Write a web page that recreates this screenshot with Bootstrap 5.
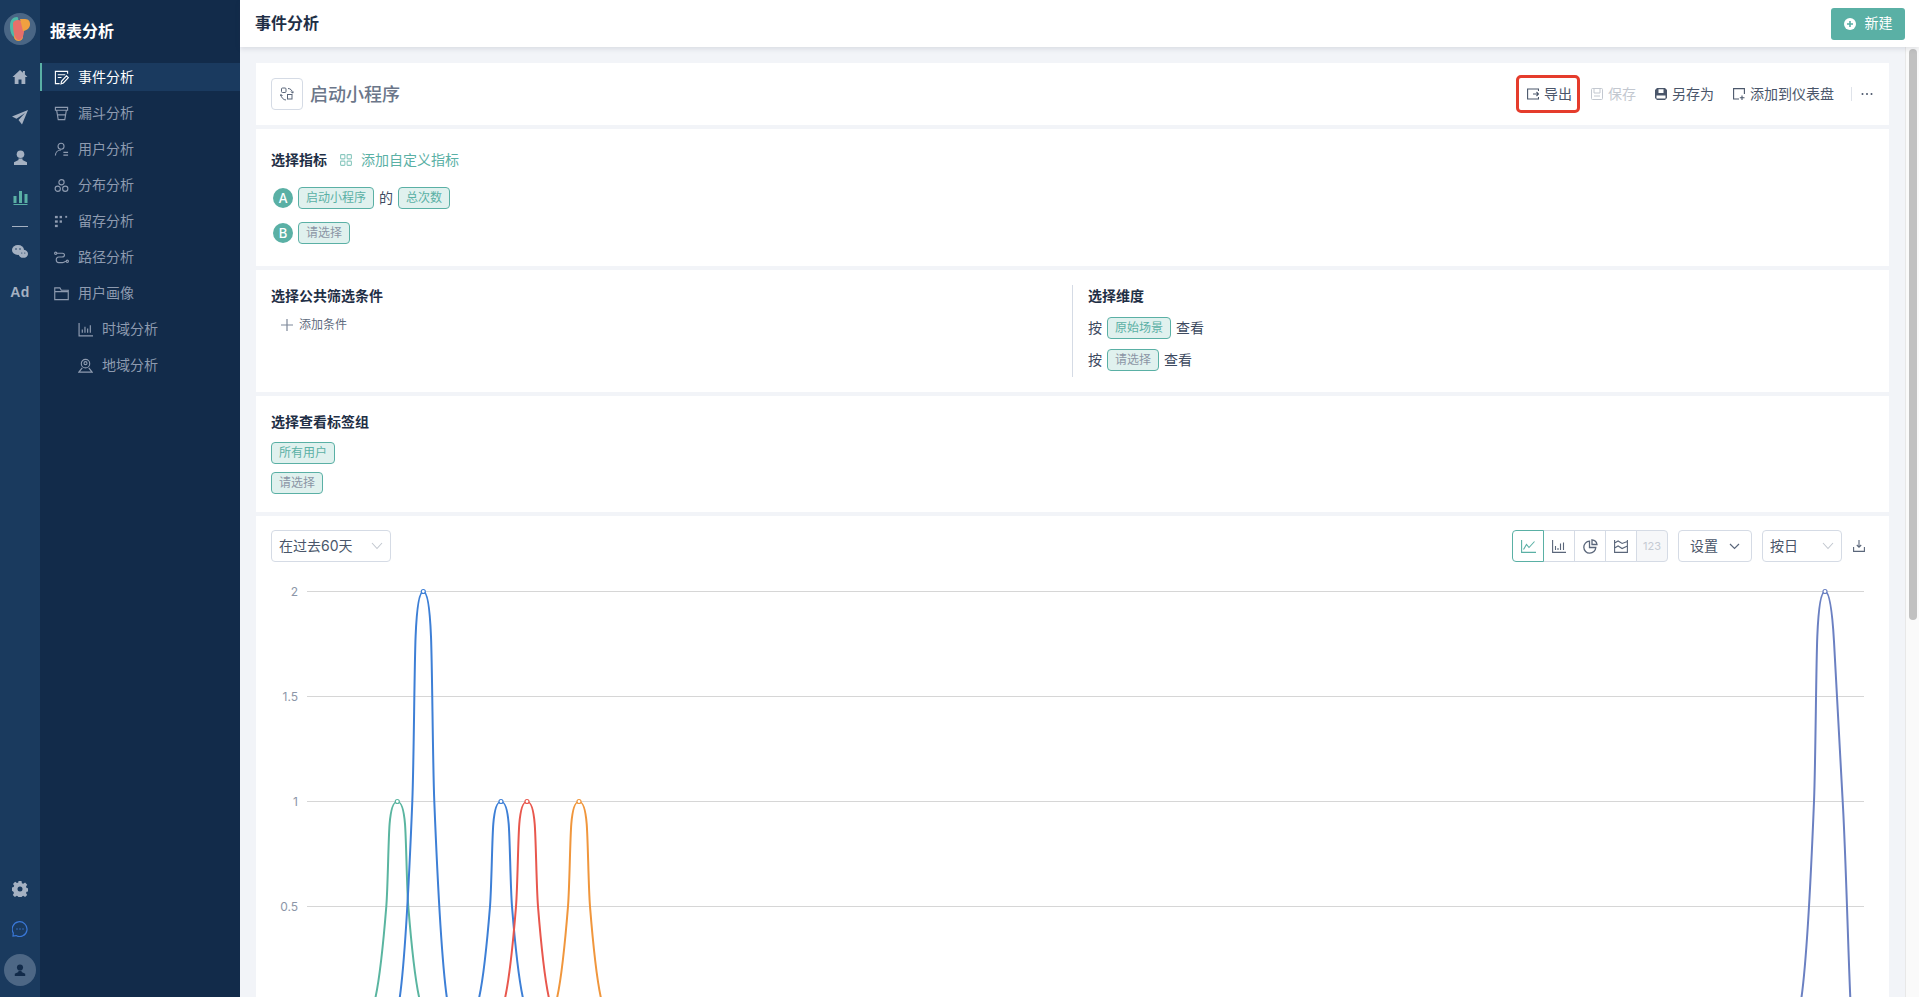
<!DOCTYPE html>
<html lang="zh-CN">
<head>
<meta charset="utf-8">
<title>事件分析</title>
<link rel="stylesheet" href="https://cdn.jsdelivr.net/npm/bootstrap@5.3.0/dist/css/bootstrap.min.css">
<style>
html,body{height:100%;margin:0;background:#f2f4f8;font-family:Inter,"Noto Sans CJK SC",sans-serif;color:#3d4a5f;font-size:14px;line-height:20px}
.app-shell{height:100vh;overflow:hidden}
.rail{width:40px;flex:none;background:#1a3a5e;color:#a5b1c2}
.rail-logo{width:32px;height:32px;border-radius:50%;background:#4a6685;margin:13px 4px 12px;flex:none;display:flex;align-items:center;justify-content:center}
.rail-slot{height:40px;flex:none;display:flex;align-items:center;justify-content:center}
.rail-sep{width:16px;height:1px;background:#a5b1c2;margin:9px 12px 5px;flex:none}
.rail-ad{font:700 14px/1 "Liberation Sans",sans-serif;letter-spacing:.3px}
.rail-avatar{width:32px;height:32px;border-radius:50%;background:#4d6785;margin:5px 4px 11px;display:flex;align-items:center;justify-content:center;flex:none}
.side{width:200px;flex:none;background:#122b4a;color:#8e9bb0}
.side-title{height:55px;padding:21px 0 0 10px;font-size:16px;line-height:20px;font-weight:700;color:#fff}
.side-item{height:28px;margin-top:8px;display:flex;align-items:center;gap:9px;color:#8e9bb0;text-decoration:none;border-left:2px solid transparent;padding-left:12px}
.side-item.on{background:#1a3a5f;color:#fff;border-left-color:#5ab0a5}
.side-item.sub{padding-left:36px}
.side-item svg{flex:none;width:15px;height:15px}
.main-col{min-width:0}
.topbar{height:47px;background:#fff;box-shadow:0 2px 5px rgba(40,50,70,.12);padding:0 14px 0 15px;position:relative;z-index:2;flex:none}
.topbar-title{font-size:16px;font-weight:700;color:#1f2f46;padding-bottom:2px}
.btn-new{background:#5ab0a5;border:0;border-radius:3px;color:#fff;height:32px;width:74px;padding:0;font-size:14px;gap:9px}
.btn-new:hover{background:#5ab0a5;color:#fff}
.btn-new-label{margin-bottom:2px}
.work-row{flex:1;min-height:0}
.scroller{flex:1;min-width:0;overflow:hidden;padding:16px;display:flex;flex-direction:column;gap:4px}
.scroll-track{width:14px;flex:none;background:#fafafa;border-left:1px solid #e8e8e8;padding:2px 2px 0 3px}
.scroll-thumb{height:571px;background:#c1c1c1;border-radius:4px}
.panel{background:#fff;padding:0 15px;flex:none}
.panel-head{height:62px}
.icon-box{width:32px;height:32px;border:1px solid #d5dbe5;border-radius:4px;margin-right:7px}
.page-name{font-size:18px;color:#6b7689;font-weight:500;padding-top:2px}
.tool{display:flex;align-items:center;gap:5px;margin-left:19px;color:#4a566a;white-space:nowrap}
.tool.off{color:#c3c8d0;margin-left:11px}
.tool.hot{margin-left:0;width:64px;height:38px;border:3px solid #e53c2c;border-radius:5px;padding-left:8px}
.tool-bar{width:1px;height:14px;background:#dfe3ea;margin:0 9px 0 17px}
.tool-more{margin-right:1px}
.panel-metric{height:137px;padding-top:21px}
.sec-title{font-weight:700;color:#1f2f46;line-height:20px}
.link-teal{color:#5ab0a5;text-decoration:none;margin-left:13px;gap:9px}
.metric-row{height:22px;gap:5px}
.metric-row.one{margin-top:17px}
.metric-row.two{margin-top:13px}
.letter{width:20px;height:20px;border-radius:50%;background:#5ab0a5;color:#fff;font-size:13px;font-weight:500;margin-left:2px;display:flex;align-items:center;justify-content:center}
.chip{display:inline-flex;align-items:center;height:22px;padding:0 7px;background:#e0f1ee;border:1px solid #5ab0a5;border-radius:4px;color:#5ab0a5;font-size:12px;line-height:20px;white-space:nowrap}
.chip.empty{color:#8b95a5}
.panel-filter{height:122px;padding-top:15px}
.filter-left{width:801px;height:92px;flex:none;padding-top:1px}
.filter-right{border-left:1px solid #d5dbe5;height:92px;padding:1px 0 0 15px}
.add-cond{color:#5f6b7e;font-size:12px;margin:10px 0 0 10px;gap:6px;line-height:18px}
.dim-row{height:22px;gap:5px;margin-top:10px}
.dim-row.first{margin-top:11px}
.panel-tags{height:116px;padding-top:16px}
.tag-line{height:22px;margin-top:10px}
.tag-line.next{margin-top:8px}
.panel-chart{min-height:1085px;padding:14px 0 0}
.chart-tools{padding:0 15px;height:32px}
.picker{height:32px;border:1px solid #d5dbe5;border-radius:4px;padding:0 7px;color:#4a566a;background:#fff}
.picker.date{width:120px}
.picker.gear{width:74px;margin-left:10px;padding:0 11px;justify-content:space-between}
.picker.day{width:80px;margin-left:10px}
.seg-group{height:32px}
.seg-btn{width:32px;height:32px;padding:0;border:1px solid #d5dbe5;margin-left:-1px;background:#fff;display:flex;align-items:center;justify-content:center;color:#5a667a}
.seg-btn.first{margin-left:0;border-radius:4px 0 0 4px;border-color:#5ab0a5;color:#5ab0a5;position:relative;z-index:1}
.seg-btn.last{border-radius:0 4px 4px 0;background:#f6f7f9;color:#c5cad3;font-size:11px}
.dl-btn{margin-left:11px;width:12px;margin-right:9px;display:flex;color:#5a667a}
.chart-area{display:block;margin-top:8px}
.axis-label{font-size:12px;fill:#8c96a8;font-family:Inter,"Liberation Sans",sans-serif}
.curve{fill:none;stroke-width:2;vector-effect:non-scaling-stroke}
</style>
</head>
<body>
<div class="app-shell d-flex">
  <aside class="rail d-flex flex-column">
    <div class="rail-logo">
      <svg width="20" height="24" viewBox="0 0 20 24"><path d="M0 9C0 3 3 0 7 0c2 0 1 4 1 6L5 20C2 20 0 15 0 9z" fill="#4fb9a8"/><ellipse cx="8.500" cy="20" rx="4.500" ry="4" fill="#f0a040"/><path d="M3 6c1-3 6-4 8-2l3 10c0 4-2 9-5 9-4 0-6-6-6-17z" fill="#e8706a"/><path d="M10 2h5c4 0 5 3 5 5 0 4-3 6-6 7h-1z" fill="#f0a040"/></svg>
    </div>
    <div class="rail-slot"><svg width="16" height="16" viewBox="0 0 16 16" fill="currentColor"><path d="M8 1 .5 8h2.200v7h3.800v-4.500h3V15h3.800V8h2.200l-2.600-2.400V2h-2v1.700z"/></svg></div>
    <div class="rail-slot"><svg width="16" height="16" viewBox="0 0 16 16" fill="currentColor"><path d="M16 1 0 7.500l4.500 2.200L13 4 6.500 11l3.500 4.500z"/></svg></div>
    <div class="rail-slot"><svg width="15" height="15" viewBox="0 0 15 15" fill="currentColor"><circle cx="7.500" cy="4.300" r="3.800"/><path d="M5.500 8.500h4v1.500l4.500 2.200V15H1v-2.800L5.500 10z"/></svg></div>
    <div class="rail-slot"><svg width="15" height="15" viewBox="0 0 15 15" fill="#5ab0a5"><rect x=".5" y="6" width="3" height="7"/><rect x="6" y="1" width="3" height="12"/><rect x="11.500" y="4" width="3" height="9"/><rect x=".5" y="14" width="14" height="1"/></svg></div>
    <div class="rail-sep"></div>
    <div class="rail-slot"><svg width="16" height="14" viewBox="0 0 16 14" fill="currentColor"><ellipse cx="6" cy="5" rx="6" ry="5"/><ellipse cx="11.300" cy="8.800" rx="4.700" ry="4"/><circle cx="4" cy="4" r=".8" fill="#1a3a5e"/><circle cx="8" cy="4" r=".8" fill="#1a3a5e"/><circle cx="9.800" cy="8" r=".6" fill="#1a3a5e"/><circle cx="12.800" cy="8" r=".6" fill="#1a3a5e"/></svg></div>
    <div class="rail-slot rail-ad">Ad</div>
    <div class="mt-auto"></div>
    <div class="rail-slot"><svg width="16" height="16" viewBox="0 0 16 16" fill="currentColor"><path fill-rule="evenodd" d="M6.500 0h3l.4 2.200 1.300.6 1.900-1.200 2.100 2.100-1.200 1.900.6 1.300 2.200.4v3l-2.200.4-.6 1.300 1.200 1.900-2.100 2.100-1.900-1.200-1.300.6-.4 2.200h-3l-.4-2.200-1.300-.6-1.900 1.200-2.100-2.100 1.200-1.900-.6-1.300L-.6 9.500v-3l2.200-.4.6-1.300L1 2.900 3.100.8 5 2l1.300-.6zM8 5.500a2.500 2.500 0 1 0 0 5 2.500 2.500 0 0 0 0-5z"/></svg></div>
    <div class="rail-slot"><svg width="16" height="16" viewBox="0 0 16 16" fill="none" stroke="#3a78d8" stroke-width="1.200"><path d="M1 15l.3-3A7.400 7.400 0 1 1 4 14.600z"/><circle cx="5" cy="8" r=".7" fill="#3a78d8" stroke="none"/><circle cx="8" cy="8" r=".7" fill="#3a78d8" stroke="none"/><circle cx="11" cy="8" r=".7" fill="#3a78d8" stroke="none"/></svg></div>
    <div class="rail-avatar"><svg width="12" height="12" viewBox="0 0 15 15" fill="#122b4a"><circle cx="7.500" cy="4.300" r="3.800"/><path d="M5.500 8.500h4v1.500l4.500 2.200V15H1v-2.800L5.500 10z"/></svg></div>
  </aside>

  <nav class="side">
    <div class="side-title">报表分析</div>
    <a class="side-item on" href="#"><svg viewBox="0 0 16 16" fill="none" stroke="currentColor" stroke-width="1.200"><path d="M6 14.500H1.500v-13h13V4M4 5h8M4 8h4"/><path d="M7.500 14.800l.5-2.800 5.300-5.800 2 1.900-5.300 5.700z"/></svg>事件分析</a>
    <a class="side-item" href="#"><svg viewBox="0 0 16 16" fill="none" stroke="currentColor" stroke-width="1.200"><path d="M1.500 1.500h13v3h-13zM2.800 4.500 4.500 14.500h7l1.700-10M3.800 9.500h8.400"/></svg>漏斗分析</a>
    <a class="side-item" href="#"><svg viewBox="0 0 16 16" fill="none" stroke="currentColor" stroke-width="1.200"><circle cx="7.500" cy="4.500" r="3.200"/><path d="M1.500 14.500c0-3.500 2.500-6 6-6M10 11h5M10 14h5"/></svg>用户分析</a>
    <a class="side-item" href="#"><svg viewBox="0 0 16 16" fill="none" stroke="currentColor" stroke-width="1.200"><circle cx="8" cy="4.500" r="2.800"/><circle cx="4" cy="11.500" r="2.800"/><circle cx="12" cy="11.500" r="2.800"/></svg>分布分析</a>
    <a class="side-item" href="#"><svg viewBox="0 0 16 16" fill="currentColor"><rect x="1" y="2" width="3" height="2.500"/><rect x="6" y="2" width="2.500" height="2.500"/><rect x="12" y="2" width="2" height="2"/><rect x="1" y="6.800" width="3" height="2.500"/><rect x="6" y="6.800" width="2.500" height="2.500"/><rect x="1" y="11.500" width="3" height="2.500"/></svg>留存分析</a>
    <a class="side-item" href="#"><svg viewBox="0 0 16 16" fill="none" stroke="currentColor" stroke-width="1.200"><circle cx="1.800" cy="3.500" r="1.200"/><circle cx="14.200" cy="12" r="1.200"/><path d="M3 3.500h6c3 0 3 4-.5 4H5c-3.500 0-3.500 6 0 6h4c1.500 0 2.500-1.500 4-1.500"/></svg>路径分析</a>
    <a class="side-item" href="#"><svg viewBox="0 0 16 16" fill="none" stroke="currentColor" stroke-width="1.200"><path d="M.8 2h5.500l1.500 2.500h7.400V14.500H.8zM.8 6h14.400"/></svg>用户画像</a>
    <a class="side-item sub" href="#"><svg viewBox="0 0 14 14" fill="none" stroke="currentColor" stroke-width="1.100"><path d="M1 1v12h13M4 10V7M6.500 10V4.500M9 10V6M11.500 10V3"/></svg>时域分析</a>
    <a class="side-item sub" href="#"><svg viewBox="0 0 16 16" fill="none" stroke="currentColor" stroke-width="1.200"><circle cx="8" cy="6" r="4.500"/><circle cx="8" cy="5.500" r="1.600"/><path d="M4.500 10.500 1 15h14l-3.500-4.500"/></svg>地域分析</a>
  </nav>

  <div class="main-col flex-grow-1 d-flex flex-column">
    <header class="topbar d-flex align-items-center justify-content-between">
      <div class="topbar-title">事件分析</div>
      <button class="btn btn-new d-flex align-items-center justify-content-center" type="button">
        <svg width="12" height="12" viewBox="0 0 12 12"><circle cx="6" cy="6" r="6" fill="#fff"/><path d="M6 3v6M3 6h6" stroke="#5ab0a5" stroke-width="1.600"/></svg><span class="btn-new-label">新建</span>
      </button>
    </header>

    <div class="work-row d-flex">
    <main class="scroller">
      <section class="panel panel-head d-flex align-items-center">
        <div class="icon-box d-flex align-items-center justify-content-center">
          <svg width="14" height="14" viewBox="0 0 14 14" fill="none" stroke="#5a667a" stroke-width="1"><rect x="1.500" y="1" width="4.500" height="4.500" rx="1"/><rect x="7.500" y="7.500" width="4.500" height="4.500"/><path d="M8 1.500c2.500 0 4.500 2 4.500 4.500M1 7.500C1 10.500 3.500 13 6 13"/><path d="M11 4.500l1.500 1.700 1.300-1.700M0 9l1-1.500L2.500 9"/></svg>
        </div>
        <div class="page-name">启动小程序</div>
        <div class="ms-auto d-flex align-items-center">
          <div class="tool hot"><svg width="12" height="12" viewBox="0 0 12 12" fill="none" stroke="currentColor" stroke-width="1.100"><path d="M11.500 3V1H.6v10h10.900V9M6 6h5.500M9.500 4l2 2-2 2"/></svg>导出</div>
          <div class="tool off"><svg width="12" height="12" viewBox="0 0 12 12" fill="none" stroke="currentColor" stroke-width="1"><rect x=".5" y=".5" width="11" height="11" rx="1"/><path d="M3 1v4h6V1M3 8h6"/></svg>保存</div>
          <div class="tool"><svg width="12" height="12" viewBox="0 0 12 12" fill="currentColor"><path fill-rule="evenodd" d="M2 0h8l2 2v8l-2 2H2L0 10V2zM3.500 1.200V5h5V1.200zM1.500 7.500v3h9v-3z"/></svg>另存为</div>
          <div class="tool"><svg width="12" height="12" viewBox="0 0 12 12" fill="none" stroke="currentColor" stroke-width="1.100"><path d="M6 11H.6V.6h10.800V6M9 7.500v4.500M6.800 9.800h4.700"/></svg>添加到仪表盘</div>
          <div class="tool-bar"></div>
          <svg class="tool-more" width="12" height="4" viewBox="0 0 12 4" fill="#4a566a"><circle cx="1.500" cy="2" r="1"/><circle cx="6" cy="2" r="1"/><circle cx="10.500" cy="2" r="1"/></svg>
        </div>
      </section>

      <section class="panel panel-metric">
        <div class="d-flex align-items-center">
          <span class="sec-title">选择指标</span>
          <a class="link-teal d-flex align-items-center" href="#"><svg width="12" height="12" viewBox="0 0 12 12" fill="none" stroke="#8ac8bf" stroke-width="1.100"><rect x=".6" y=".6" width="4.300" height="4.300" rx=".8"/><rect x="7.100" y=".6" width="4.300" height="4.300" rx=".8"/><rect x=".6" y="7.100" width="4.300" height="4.300" rx=".8"/><rect x="7.100" y="7.100" width="4.300" height="4.300" rx=".8"/></svg>添加自定义指标</a>
        </div>
        <div class="metric-row one d-flex align-items-center"><span class="letter">A</span><span class="chip">启动小程序</span><span>的</span><span class="chip">总次数</span></div>
        <div class="metric-row two d-flex align-items-center"><span class="letter">B</span><span class="chip empty">请选择</span></div>
      </section>

      <section class="panel panel-filter d-flex">
        <div class="filter-left">
          <div class="sec-title">选择公共筛选条件</div>
          <div class="add-cond d-flex align-items-center"><svg width="12" height="12" viewBox="0 0 12 12" stroke="#7d8899" stroke-width="1.200"><path d="M6 0v12M0 6h12"/></svg>添加条件</div>
        </div>
        <div class="filter-right flex-grow-1">
          <div class="sec-title">选择维度</div>
          <div class="dim-row first d-flex align-items-center"><span>按</span><span class="chip">原始场景</span><span>查看</span></div>
          <div class="dim-row d-flex align-items-center"><span>按</span><span class="chip empty">请选择</span><span>查看</span></div>
        </div>
      </section>

      <section class="panel panel-tags">
        <div class="sec-title">选择查看标签组</div>
        <div class="tag-line"><span class="chip">所有用户</span></div>
        <div class="tag-line next"><span class="chip empty">请选择</span></div>
      </section>

      <section class="panel panel-chart">
        <div class="chart-tools d-flex align-items-center">
          <div class="picker date d-flex align-items-center justify-content-between"><span>在过去60天</span><svg width="12" height="8" viewBox="0 0 12 8" fill="none" stroke="#c3c8d0" stroke-width="1.100"><path d="M1 1l5 5.500L11 1"/></svg></div>
          <div class="seg-group btn-group ms-auto" role="group">
            <div class="seg-btn first"><svg width="15" height="13" viewBox="0 0 15 13" fill="none" stroke="currentColor" stroke-width="1.100"><path d="M.6 0v12.400H15M2.500 9.500 5.500 4.500 8 7.500 13.500 1.500"/></svg></div>
            <div class="seg-btn"><svg width="14" height="13" viewBox="0 0 14 13" fill="none" stroke="currentColor" stroke-width="1.100"><path d="M.6 0v12.400H14M3.500 10V6M6 10V8M8.500 10V3.500M11.500 10V2.500"/></svg></div>
            <div class="seg-btn"><svg width="15" height="15" viewBox="0 0 15 15" fill="none" stroke="currentColor" stroke-width="1.300"><path d="M6.500 2.200a6 6 0 1 0 6.300 6.300H6.500z"/><path d="M9 .8v4.700h5a5.500 5.500 0 0 0-5-4.700z"/></svg></div>
            <div class="seg-btn"><svg width="14" height="13" viewBox="0 0 14 13" fill="none" stroke="currentColor" stroke-width="1.100"><path d="M.6 0v12.400h12.800V0M.6 3l3.500-2 4 2.500 5.300-2M.6 8l3.500-2 4 2.500 5.300-2.500"/></svg></div>
            <div class="seg-btn last">123</div>
          </div>
          <div class="picker gear d-flex align-items-center"><span>设置</span><svg width="11" height="7" viewBox="0 0 11 7" fill="none" stroke="#5a667a" stroke-width="1.200"><path d="M1 1l4.500 4.500L10 1"/></svg></div>
          <div class="picker day d-flex align-items-center justify-content-between"><span>按日</span><svg width="12" height="8" viewBox="0 0 12 8" fill="none" stroke="#c3c8d0" stroke-width="1.100"><path d="M1 1l5 5.500L11 1"/></svg></div>
          <div class="dl-btn"><svg width="12" height="12" viewBox="0 0 12 12" fill="none" stroke="currentColor" stroke-width="1.100"><path d="M6 0v7M3.800 5 6 7.300 8.200 5M.6 7v4.400h10.800V7"/></svg></div>
        </div>
        <svg class="chart-area" width="1633" height="450" viewBox="256 570 1633 450">
          <defs>
            <path id="peak" d="M-26 420C-20 395-14.500 297-11 210-9.400 170-9 77-7.700 45-6.200 8-3 0 0 0 3 0 6.200 8 7.700 45 9 77 9.400 170 11 210 14.500 297 20 395 26 420"/>
          </defs>
          <path stroke="#d6d6d6" stroke-width="1" fill="none" d="M307 591.500H1864M307 696.500H1864M307 801.500H1864M307 906.500H1864"/>
          <g text-anchor="end">
            <text class="axis-label" x="298" y="595.500">2</text>
            <text class="axis-label" x="298" y="700.500">1.5</text>
            <text class="axis-label" x="298" y="805.500">1</text>
            <text class="axis-label" x="298" y="910.500">0.5</text>
          </g>
          <use href="#peak" class="curve" stroke="#5ab5a0" transform="translate(397.300 801.500) scale(1 .5)"/>
          <use href="#peak" class="curve" stroke="#3d7fd6" transform="translate(423.300 591.500)"/>
          <use href="#peak" class="curve" stroke="#3d7fd6" transform="translate(501 801.500) scale(1 .5)"/>
          <use href="#peak" class="curve" stroke="#e8574d" transform="translate(527 801.500) scale(1 .5)"/>
          <use href="#peak" class="curve" stroke="#f0963c" transform="translate(579 801.500) scale(1 .5)"/>
          <path class="curve" stroke="#6b80c2" d="M1799 1011.500C1805 986.500 1810.500 888.500 1814 801.500 1815.600 761.500 1816 668.500 1817.300 636.500 1818.800 599.500 1822 591.500 1825 591.500 1829 591.500 1832 606.500 1834 641.500 1836 676.500 1838 721.500 1842.700 801.500 1846 857.500 1849 981.500 1851 1011.500"/>
          <g fill="#fff" stroke-width="1.200">
            <circle cx="397.300" cy="801.500" r="2" stroke="#5ab5a0"/>
            <circle cx="423.300" cy="591.500" r="2" stroke="#3d7fd6"/>
            <circle cx="501" cy="801.500" r="2" stroke="#3d7fd6"/>
            <circle cx="527" cy="801.500" r="2" stroke="#e8574d"/>
            <circle cx="579" cy="801.500" r="2" stroke="#f0963c"/>
            <circle cx="1825" cy="591.500" r="2" stroke="#6b80c2"/>
          </g>
        </svg>
      </section>
    </main>
    <div class="scroll-track"><div class="scroll-thumb"></div></div>
    </div>
  </div>
</div>
<script src="https://cdn.jsdelivr.net/npm/bootstrap@5.3.0/dist/js/bootstrap.bundle.min.js"></script>
</body>
</html>
